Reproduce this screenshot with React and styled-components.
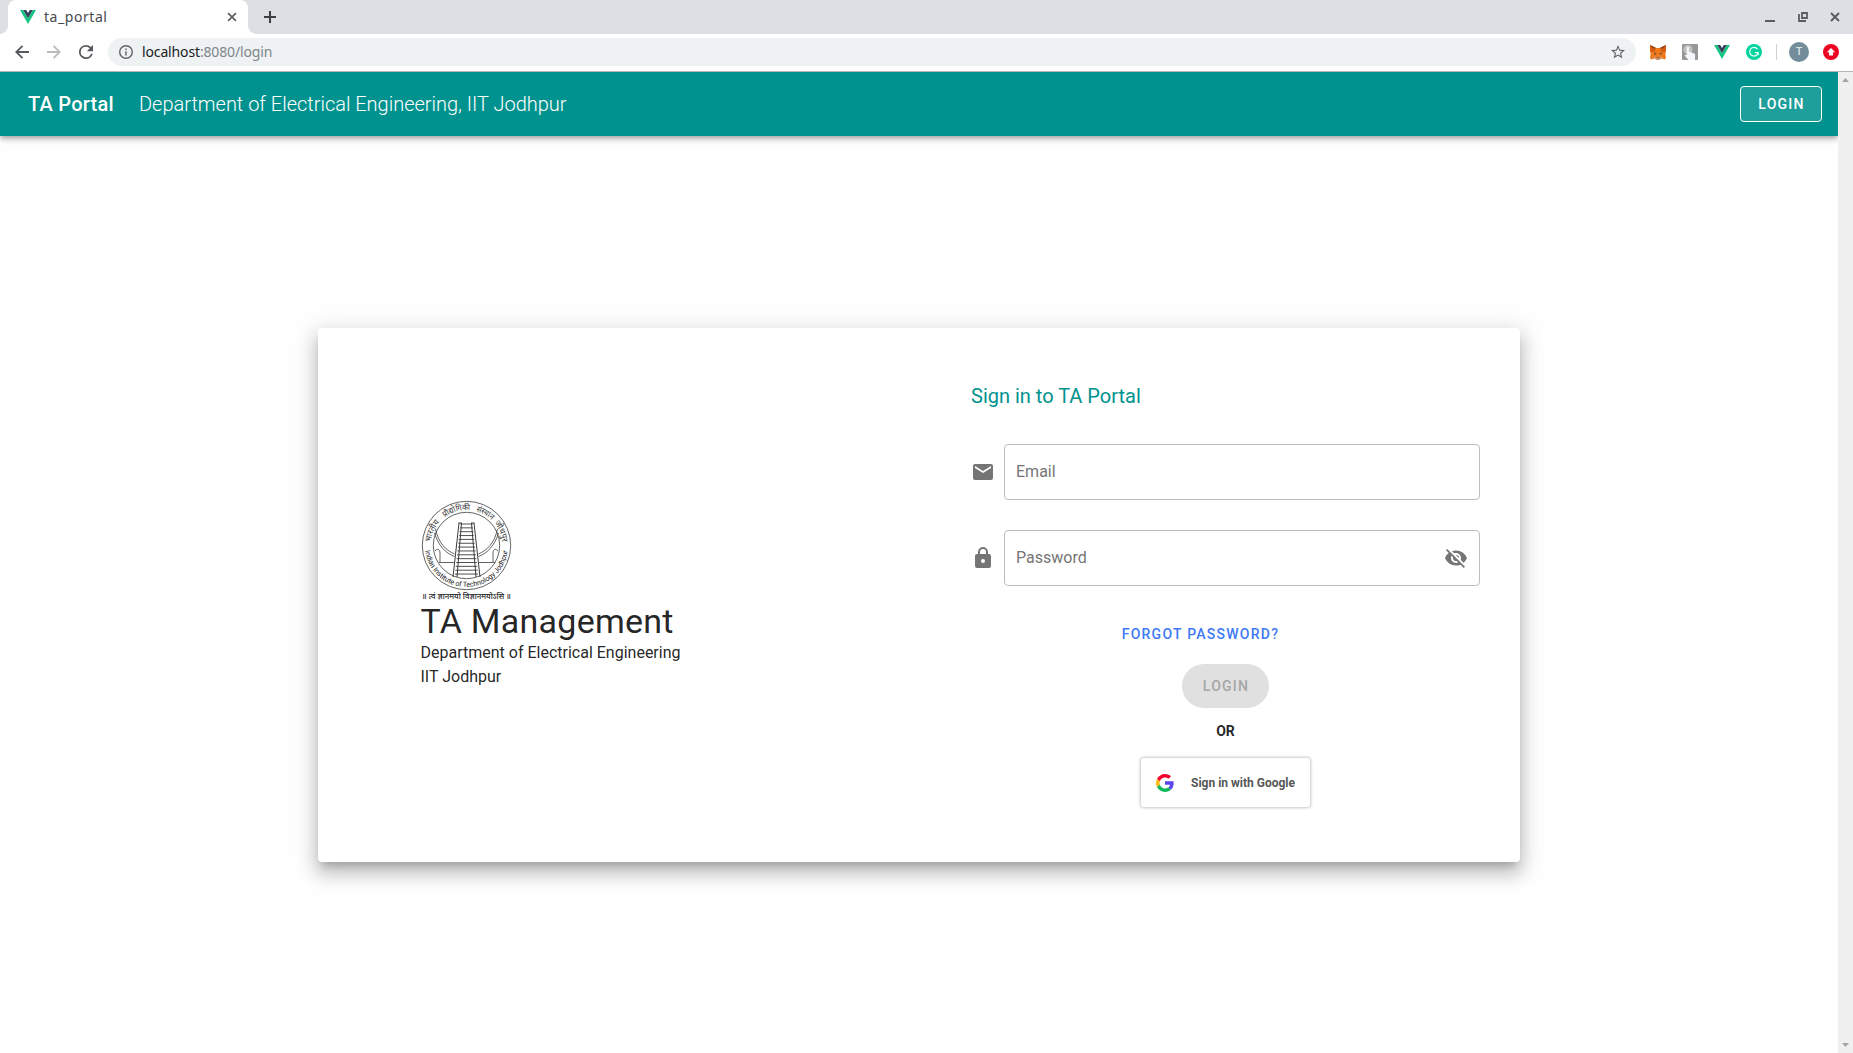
import React from "react";
import styled, { createGlobalStyle } from "styled-components";

const GlobalStyle = createGlobalStyle`
  * { box-sizing: border-box; }
  html, body { margin: 0; padding: 0; overflow: hidden; }
  body { font-family: Roboto, "Liberation Sans", sans-serif; color: rgba(0, 0, 0, 0.87); }
  button { font-family: inherit; cursor: pointer; }
  svg { display: block; flex: none; }
`;

const Window = styled.div`
  display: flex;
  flex-direction: column;
  width: 100vw;
  height: 100vh;
  overflow: hidden;
  background: #fff;
`;

/* ---------- browser frame ---------- */

const TabStrip = styled.div`
  display: flex;
  flex: none;
  height: 34px;
  padding-left: 8px;
  background: #dedfe4;
`;

const Tab = styled.div`
  position: relative;
  display: flex;
  align-items: center;
  width: 240px;
  height: 34px;
  padding: 0 11px 0 12px;
  background: #fff;
  border-radius: 8px 8px 0 0;
  &::before, &::after {
    content: "";
    position: absolute;
    bottom: 0;
    width: 8px;
    height: 8px;
  }
  &::before { left: -8px; background: radial-gradient(circle at 0 0, #dedfe4 7.5px, #fff 8px); }
  &::after { right: -8px; background: radial-gradient(circle at 100% 0, #dedfe4 7.5px, #fff 8px); }
`;

const TabTitle = styled.span`
  flex: 1;
  margin-left: 8px;
  font: 14px/20px "Noto Sans", "Open Sans", sans-serif;
  letter-spacing: 0.55px;
  color: #45494d;
`;

const NewTab = styled.div`
  display: flex;
  align-items: center;
  margin-left: 16px;
`;

const WindowControls = styled.div`
  display: flex;
  align-items: center;
  gap: 22.5px;
  margin-left: auto;
  padding-right: 13px;
`;

const Toolbar = styled.div`
  display: flex;
  flex: none;
  align-items: center;
  height: 38px;
  padding: 0 14px 1px 15px;
  border-bottom: 1px solid #b6b4b6;
  background: #fff;
`;

const NavIcons = styled.div`
  display: flex;
  gap: 18px;
  width: 93px;
`;

const AddressBar = styled.div`
  display: flex;
  flex: 1;
  align-items: center;
  height: 28px;
  padding: 0 11px;
  border-radius: 14px;
  background: #eef2f3;
`;

const Url = styled.span`
  flex: 1;
  margin-left: 9px;
  font: 14px/20px "Noto Sans", "Open Sans", sans-serif;
  letter-spacing: -0.14px;
  color: #80868b;
  b { font-weight: 400; color: #202124; }
`;

const Extensions = styled.div`
  display: flex;
  align-items: center;
  gap: 16px;
  margin-left: 14px;
`;

const Divider = styled.div`
  width: 1px;
  height: 16px;
  margin: 0 -4px 0 -2px;
  background: #cfd1d4;
`;

const Avatar = styled.div`
  width: 20px;
  height: 20px;
  margin-right: -2px;
  border-radius: 50%;
  background: #728d99;
  color: #dbe3e6;
  font: 500 11px/20px Roboto, sans-serif;
  text-align: center;
`;

const Viewport = styled.div`
  display: flex;
  flex: 1;
  min-height: 0;
`;

const Scrollbar = styled.div`
  display: flex;
  flex: none;
  flex-direction: column;
  justify-content: space-between;
  align-items: center;
  width: 15px;
  padding: 6px 0;
  background: #f0f0f0;
`;

/* ---------- page ---------- */

const Page = styled.main`
  flex: 1;
  overflow: hidden;
  background: #fefefe;
`;

const AppBar = styled.header`
  display: flex;
  align-items: center;
  height: 64px;
  padding: 0 16px 0 28px;
  background: #00928e;
  color: #fff;
  box-shadow: 0 2px 4px -1px rgba(0, 0, 0, 0.2), 0 4px 5px 0 rgba(0, 0, 0, 0.14), 0 1px 10px 0 rgba(0, 0, 0, 0.12);
`;

const Brand = styled.span`
  width: 111px;
  font-size: 20px;
  line-height: 30px;
  font-weight: 500;
  letter-spacing: 0.25px;
`;

const Department = styled.span`
  flex: 1;
  font-size: 20px;
  line-height: 30px;
  font-weight: 300;
  letter-spacing: -0.015px;
`;

const Button = styled.button`
  font-size: 14px;
  font-weight: 500;
  letter-spacing: 1.25px;
  text-transform: uppercase;
  border: none;
  padding: 0;
`;

const OutlinedButton = styled(Button)`
  width: 82px;
  height: 36px;
  padding-left: 1px;
  border: 1px solid #fff;
  border-radius: 4px;
  background: #1f9f9b;
  color: #fff;
`;

const Card = styled.section`
  display: flex;
  width: 1202px;
  height: 534px;
  margin: 192px auto 0;
  border-radius: 4px;
  background: #fff;
  box-shadow: 0 7px 8px -4px rgba(0, 0, 0, 0.2), 0 12px 17px 2px rgba(0, 0, 0, 0.14), 0 5px 22px 4px rgba(0, 0, 0, 0.12);
`;

const About = styled.div`
  width: 653px;
  padding: 172px 0 0 102.5px;
`;

const Title = styled.h1`
  margin: 0;
  font-size: 34px;
  line-height: 40px;
  font-weight: 400;
  letter-spacing: 0.25px;
`;

const Subtitle = styled.p`
  margin: 0;
  font-size: 16px;
  line-height: 24px;
`;

const Form = styled.form`
  display: flex;
  flex-direction: column;
  width: 509px;
  padding-top: 52px;
`;

const Heading = styled.h2`
  margin: 0 0 32px;
  font-size: 20px;
  line-height: 32px;
  font-weight: 400;
  color: #00928e;
`;

const Field = styled.div`
  display: flex;
  align-items: center;
  gap: 9px;
  margin-bottom: 30px;
  color: #757575;
`;

const InputBox = styled.div`
  display: flex;
  flex: 1;
  align-items: center;
  justify-content: space-between;
  height: 56px;
  padding: 0 11px;
  border: 1px solid #bdbdbd;
  border-radius: 4px;
  font-size: 16px;
`;

const Placeholder = styled.span`
  padding-bottom: 2px;
`;

const Actions = styled.div`
  display: flex;
  flex-direction: column;
  align-items: center;
`;

const ForgotLink = styled(Button)`
  height: 36px;
  margin: 0 50px 12px 0;
  background: none;
  color: #3f79f5;
`;

const PillButton = styled(Button)`
  width: 87px;
  height: 44px;
  padding-left: 1px;
  border-radius: 22px;
  background: #e0e0e0;
  color: #a6a6a6;
`;

const Or = styled.strong`
  margin: 13px 0 16px;
  font-size: 14px;
  line-height: 21px;
  font-weight: 700;
`;

const GoogleButton = styled.button`
  display: flex;
  align-items: center;
  gap: 17px;
  width: 169px;
  height: 49px;
  padding: 0 0 0 15px;
  border: none;
  border-radius: 3px;
  background: #fff;
  box-shadow: 0 0 3px 1px rgba(0, 0, 0, 0.22);
  color: #565656;
  font-size: 12px;
  font-weight: 700;
  white-space: nowrap;
`;

/* ---------- drawings ---------- */

const Vue = () => (
  <svg width="16" height="14" viewBox="0 0 16 14">
    <path d="M0 0h3.2L8 8.3 12.8 0H16L8 14z" fill="#18c683" />
    <path d="M3.2 0h3L8 3.1 9.8 0h3L8 8.3z" fill="#35405a" />
  </svg>
);

const Stroke = ({ size = 14, d, color = "#5a5e62", width = 2 }) => (
  <svg width={size} height={size} viewBox="0 0 14 14">
    <path d={d} fill="none" stroke={color} strokeWidth={width} />
  </svg>
);

const Glyph = ({ size = 24, d, color = "currentColor", box = "0 0 24 24" }) => (
  <svg width={size} height={size} viewBox={box}>
    <path d={d} fill={color} />
  </svg>
);

const Fox = () => (
  <svg width="16" height="15" viewBox="0 0 16 15">
    <path d="M0 0l6 3h4l6-3v5l-.6 4 .6 4-1.5 1.500-3.500-1-1.500 1.500h-3L5 13.500l-3.500 1L0 13l.6-4L0 5z" fill="#ef7a1e" />
    <path d="M0 0l6 3-1 4-4.500 0L0 4zM16 0l-6 3 1 4h4.500L16 4z" fill="#d75f13" />
    <path d="M0 0l6 3-3 .5zM16 0l-6 3 3 .5z" fill="#8a3c18" />
    <path d="M4.500 7.500l2.300 1.500-2.300.5zM11.500 7.500L9.200 9l2.300.5zM6.500 12.500h3l-.5 1.500H7z" fill="#343a45" />
    <path d="M1.500 14.300L5 13.200l1.500 1.800h3l1.500-1.800 3.500 1.100-3-2.500-2 1h-3l-2-1z" fill="#c9ab95" opacity=".7" />
  </svg>
);

const Touch = () => (
  <svg width="16" height="16" viewBox="0 0 16 16">
    <rect width="16" height="16" rx="1" fill="#979797" />
    <circle cx="6" cy="5.500" r="4.500" fill="#c2c2c2" />
    <path d="M4.800 3.500c0-1.400 2.200-1.400 2.200 0v4.200l4.800 1.500c1 .4 1.500 1.300 1.300 2.300L13 16H6.500L3 12c-.5-1 .7-1.600 1.800-.8z" fill="#f3f6fb" />
  </svg>
);

const Google = () => (
  <svg width="18" height="18" viewBox="0 0 18 18">
    <path d="M9 3.480c1.690 0 2.830.73 3.480 1.340l2.540-2.480C13.460.89 11.430 0 9 0 5.480 0 2.440 2.020.96 4.960l2.910 2.260C4.600 5.050 6.620 3.480 9 3.480z" fill="#f5002d" />
    <path d="M17.640 9.200c0-.74-.06-1.280-.19-1.840H9v3.340h4.960c-.1.830-.64 2.080-1.840 2.920l2.840 2.200c1.700-1.570 2.680-3.880 2.680-6.620z" fill="#5a46f0" />
    <path d="M3.880 10.780A5.540 5.540 0 0 1 3.580 9c0-.62.11-1.220.29-1.780L.96 4.960A9.008 9.008 0 0 0 0 9c0 1.450.35 2.820.96 4.040l2.920-2.260z" fill="#fbb912" />
    <path d="M9 18c2.430 0 4.470-.8 5.960-2.180l-2.840-2.200c-.76.53-1.780.9-3.120.9-2.380 0-4.400-1.570-5.120-3.740L.97 13.040C2.450 15.980 5.480 18 9 18z" fill="#0cb958" />
  </svg>
);

const deva = '"Noto Sans Devanagari", "Noto Sans", sans-serif';

/* Words of the institute's Hindi name: offset and length along the upper ring. */
const ringWords = [
  ["भारतीय", 4, 22],
  ["प्रौद्योगिकी", 33, 27],
  ["संस्थान", 66, 18],
  ["जोधपुर", 88, 21],
];

const Emblem = () => {
  const rungs = Array.from({ length: 14 }, (_, i) => {
    const y = 24 + i * 3.85;
    const half = 6 + i * 0.43;
    return <path key={i} d={`M${45.5 - half} ${y}h${half * 2}`} />;
  });
  return (
    <svg width="91" height="101" viewBox="0 0 91 101">
      <defs>
        <path id="ring-top" d="M9.500 46a36 36 0 0 1 72 0" />
        <path id="ring-bottom" d="M4 45.500a41.500 41.500 0 0 0 83 0" />
      </defs>
      <g fill="none" stroke="#3c3c3c" strokeWidth=".8">
        <circle cx="45.500" cy="45.500" r="44.200" />
        <circle cx="45.500" cy="45.500" r="33.200" />
        <path d="M14.500 29c3 14 10 21 19 25M13.500 33c4 13 11 20 20 23.500M76.500 29c-3 14-10 21-19 25M77.500 33c-4 13-11 20-20 23.500" />
        <path d="M18 62.500h15.500M57.500 62.500H74M14 51c3-3.500 5-1 5 2v9M77 51c-3-3.500-5-1-5 2v9" />
        <path d="M38 23l-6 54M40.500 23l-4.500 54M50.500 23l4.500 54M53 23l6 54M37.500 23h3.500M50 23h3.500" strokeWidth="1" />
        <g strokeWidth=".9">{rungs}</g>
      </g>
      {ringWords.map(([word, start, length]) => (
        <text key={word} fontFamily={deva} fontSize="8.200" fill="#333">
          <textPath href="#ring-top" startOffset={start} textLength={length} lengthAdjust="spacingAndGlyphs">{word}</textPath>
        </text>
      ))}
      <text fontFamily="Roboto, sans-serif" fontSize="7.200" fill="#222">
        <textPath href="#ring-bottom" startOffset="5" textLength="120" lengthAdjust="spacingAndGlyphs">Indian Institute of Technology Jodhpur</textPath>
      </text>
      <text x="1" y="99" textLength="89" lengthAdjust="spacingAndGlyphs" fontFamily={deva} fontSize="8" fontWeight="500" fill="#222">॥ त्वं ज्ञानमयो विज्ञानमयोऽसि ॥</text>
    </svg>
  );
};

export default function App() {
  return (
    <Window>
      <GlobalStyle />
      <TabStrip>
        <Tab>
          <Vue />
          <TabTitle>ta_portal</TabTitle>
          <Stroke size={10} d="M1.500 1.500l11 11M12.500 1.500l-11 11" width={2.3} />
        </Tab>
        <NewTab><Stroke size={12} d="M7 0v14M0 7h14" color="#3c4043" width={2.4} /></NewTab>
        <WindowControls>
          <svg width="10" height="10"><path d="M0 9h10" stroke="#5a5e62" strokeWidth="2" /></svg>
          <svg width="10" height="10"><path d="M4 1h5v5H4zM1 2v7h7" fill="none" stroke="#5a5e62" strokeWidth="1.800" /></svg>
          <svg width="10" height="10"><path d="M1 1l8 8M9 1L1 9" stroke="#5a5e62" strokeWidth="2" /></svg>
        </WindowControls>
      </TabStrip>
      <Toolbar>
        <NavIcons>
          <Stroke d="M14 7H1.500M7.500 .8L1.300 7l6.200 6.200" color="#55595e" width={1.8} />
          <Stroke d="M0 7h12.500M6.500 .8L12.700 7l-6.200 6.200" color="#b9bbbd" width={1.8} />
          <Glyph size={14} box="4 4 16 16" color="#55595e" d="M17.650 6.350A7.958 7.958 0 0 0 12 4a8 8 0 1 0 7.730 10h-2.080A6 6 0 1 1 12 6c1.660 0 3.140.69 4.220 1.780L13 11h7V4l-2.350 2.350z" />
        </NavIcons>
        <AddressBar>
          <Glyph size={14} box="2 2 20 20" color="#5f6368" d="M11 7h2v2h-2zm0 4h2v6h-2zm1-9a10 10 0 1 0 0 20 10 10 0 0 0 0-20zm0 18a8 8 0 1 1 0-16 8 8 0 0 1 0 16z" />
          <Url><b>localhost</b>:8080/login</Url>
          <Glyph size={14} box="2 2 20 20" color="#5f6368" d="M22 9.240l-7.190-.62L12 2 9.190 8.630 2 9.240l5.460 4.730L5.820 21 12 17.270 18.180 21l-1.630-7.030L22 9.240zM12 15.400l-3.760 2.270 1-4.280-3.320-2.880 4.380-.38L12 6.100l1.710 4.040 4.380.38-3.320 2.880 1 4.280L12 15.400z" />
        </AddressBar>
        <Extensions>
          <Fox />
          <Touch />
          <Vue />
          <svg width="16" height="16" viewBox="0 0 16 16">
            <circle cx="8" cy="8" r="8" fill="#08d3a0" />
            <path d="M11.500 5.200A4.300 4.300 0 1 0 12.200 8.700H9M12.200 8.700v2.500" fill="none" stroke="#e5fff8" strokeWidth="1.200" />
          </svg>
          <Divider />
          <Avatar>T</Avatar>
          <svg width="16" height="16" viewBox="0 0 16 16">
            <circle cx="8" cy="8" r="8" fill="#ee0423" />
            <path d="M8 4l4.200 4.300H10V11.500H6V8.300H3.800z" fill="#fff" />
          </svg>
        </Extensions>
      </Toolbar>
      <Viewport>
        <Page>
          <AppBar>
            <Brand>TA Portal</Brand>
            <Department>Department of Electrical Engineering, IIT Jodhpur</Department>
            <OutlinedButton>Login</OutlinedButton>
          </AppBar>
          <Card>
            <About>
              <Emblem />
              <Title>TA Management</Title>
              <Subtitle>Department of Electrical Engineering</Subtitle>
              <Subtitle>IIT Jodhpur</Subtitle>
            </About>
            <Form>
              <Heading>Sign in to TA Portal</Heading>
              <Field>
                <Glyph d="M20 4H4c-1.110 0-2 .89-2 2v12a2 2 0 0 0 2 2h16a2 2 0 0 0 2-2V6c0-1.110-.9-2-2-2m0 4l-8 5-8-5V6l8 5 8-5v2z" />
                <InputBox><Placeholder>Email</Placeholder></InputBox>
              </Field>
              <Field>
                <Glyph d="M12 17a2 2 0 0 0 2-2 2 2 0 0 0-2-2 2 2 0 0 0-2 2 2 2 0 0 0 2 2m6-9a2 2 0 0 1 2 2v10a2 2 0 0 1-2 2H6a2 2 0 0 1-2-2V10a2 2 0 0 1 2-2h1V6a5 5 0 0 1 5-5 5 5 0 0 1 5 5v2h1m-6-5a3 3 0 0 0-3 3v2h6V6a3 3 0 0 0-3-3z" />
                <InputBox>
                  <Placeholder>Password</Placeholder>
                  <Glyph d="M11.830 9L15 12.160V12a3 3 0 0 0-3-3h-.17m-4.300.8l1.550 1.550c-.05.21-.08.420-.08.650a3 3 0 0 0 3 3c.22 0 .44-.03.650-.08l1.550 1.550c-.67.330-1.410.530-2.200.530a5 5 0 0 1-5-5c0-.79.200-1.530.530-2.200M2 4.270l2.280 2.280.45.450C3.080 8.300 1.780 10 1 12c1.730 4.390 6 7.500 11 7.500 1.550 0 3.030-.3 4.380-.84l.43.420L19.730 22 21 20.730 3.270 3M12 7a5 5 0 0 1 5 5c0 .64-.13 1.260-.36 1.820l2.930 2.930c1.500-1.250 2.700-2.890 3.430-4.750-1.730-4.390-6-7.500-11-7.500-1.400 0-2.740.25-4 .7l2.170 2.150C10.740 7.130 11.350 7 12 7z" />
                </InputBox>
              </Field>
              <Actions>
                <ForgotLink type="button">Forgot Password?</ForgotLink>
                <PillButton type="button">Login</PillButton>
                <Or>OR</Or>
                <GoogleButton type="button"><Google />Sign in with Google</GoogleButton>
              </Actions>
            </Form>
          </Card>
        </Page>
        <Scrollbar>
          <svg width="7" height="4"><path d="M0 4L3.500 0 7 4z" fill="#a3a3a3" /></svg>
          <svg width="7" height="4"><path d="M0 0h7L3.500 4z" fill="#a3a3a3" /></svg>
        </Scrollbar>
      </Viewport>
    </Window>
  );
}
